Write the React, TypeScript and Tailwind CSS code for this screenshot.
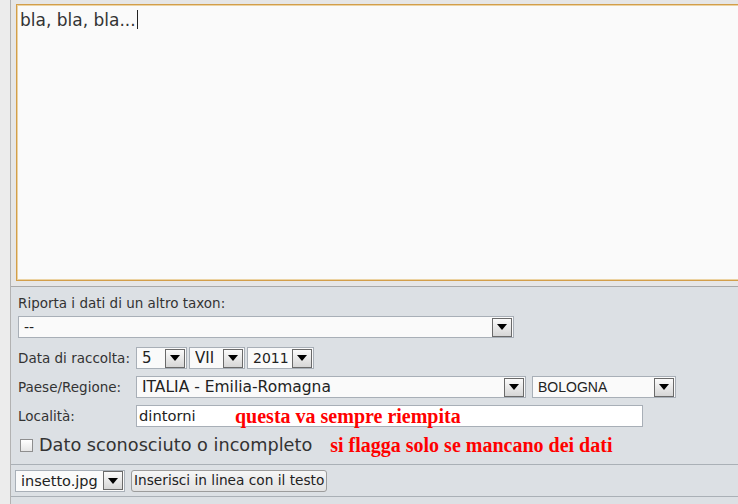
import React from "react";

function Arrow() {
  return (
    <div className="m-[1px] flex h-[19px] w-[20px] shrink-0 items-center justify-center border border-[#6a6a6a] bg-gradient-to-b from-[#fbfbfb] to-[#d6d6d6]">
      <svg width="10" height="6" viewBox="0 0 10 6">
        <polygon points="0,0 10,0 5,6" fill="#000" />
      </svg>
    </div>
  );
}

function Sel({ w, text, cls = "" }: { w: string; text: string; cls?: string }) {
  return (
    <div className={`flex h-[22px] items-center border border-[#a8afb7] bg-[#fafafa] pl-[5px] ${w}`}>
      <span className={`min-w-0 flex-1 overflow-hidden whitespace-nowrap leading-[20px] text-[#222] ${cls}`}>{text}</span>
      <Arrow />
    </div>
  );
}

export default function App() {
  return (
    <div className="flex h-[504px] w-[738px] overflow-hidden bg-[#dce0e4] text-[#333]" style={{ fontFamily: '"DejaVu Sans", Verdana, sans-serif' }}>
      <div className="w-[11px] shrink-0 border-r border-[#b2b2b2] bg-[#ececec]" />
      <div className="flex min-w-0 flex-1 flex-col">
        <div className="flex h-[287px] shrink-0 flex-col border-b border-[#a9a9a9] bg-[#e6e6e6] pl-[5px] pt-[4px]">
          <div className="h-[277px] w-[760px] border border-[#d29e4a] bg-[#fafafa] pl-[3px] pt-[2px] shadow-[inset_0_0_0_1px_#ecd3a3]">
            <span className="text-[17px] leading-[24px] text-[#333]">bla, bla, bla...</span>
            <span className="ml-[1px] inline-block h-[19px] w-[1px] translate-y-[3px] bg-[#222]" />
          </div>
        </div>

        <div className="flex flex-col pl-[7px]">
          <div className="mt-[8px] h-[16px] text-[13.5px] leading-[16px]">Riporta i dati di un altro taxon:</div>
          <div className="mt-[5px]">
            <Sel w="w-[496px]" text="--" cls="text-[14px]" />
          </div>
          <div className="mt-[9px] flex h-[22px] items-center">
            <span className="w-[118px] text-[13.5px]">Data di raccolta:</span>
            <div className="flex gap-[2px]">
              <Sel w="w-[51px]" text="5" cls="text-[15px]" />
              <Sel w="w-[56px]" text="VII" cls="text-[15px]" />
              <Sel w="w-[67px]" text="2011" cls="text-[14px]" />
            </div>
          </div>
          <div className="mt-[7px] flex h-[22px] items-center">
            <span className="w-[118px] text-[13.5px]">Paese/Regione:</span>
            <Sel w="w-[390px]" text="ITALIA - Emilia-Romagna" cls="text-[15.5px]" />
            <div className="ml-[6px]">
              <Sel w="w-[144px]" text="BOLOGNA" cls="font-['Liberation_Sans'] text-[14px]" />
            </div>
          </div>
          <div className="mt-[7px] flex h-[22px] items-center">
            <span className="w-[118px] text-[13.5px]">Località:</span>
            <div className="flex h-[22px] w-[507px] items-center border border-[#a8afb7] bg-white pl-[2px]">
              <span className="w-[96px] text-[14.7px] text-[#222]">dintorni</span>
              <span className="text-[20px] font-bold leading-none text-[#ff0000]" style={{ fontFamily: '"Liberation Serif", serif' }}>
                questa va sempre riempita
              </span>
            </div>
          </div>
          <div className="mt-[7px] flex h-[22px] items-center">
            <span className="ml-[2px] h-[13px] w-[13px] border border-[#8e8e8e] bg-gradient-to-b from-white to-[#e6e6e6]" />
            <span className="ml-[6px] text-[17.7px] text-[#333]">Dato sconosciuto o incompleto</span>
            <span className="ml-[18px] text-[20px] font-bold text-[#ff0000]" style={{ fontFamily: '"Liberation Serif", serif' }}>
              si flagga solo se mancano dei dati
            </span>
          </div>
        </div>

        <div className="mt-[8px] flex h-[33px] shrink-0 items-center gap-[6px] border-y border-[#aab0b6] pl-[4px]">
          <Sel w="w-[110px]" text="insetto.jpg" cls="text-[14.5px]" />
          <div className="flex h-[22px] items-center rounded-[3px] border border-[#9c9c9c] bg-gradient-to-b from-[#f6f6f6] to-[#e2e2e2] px-[2px] text-[13.7px] text-[#222]">
            Inserisci in linea con il testo
          </div>
        </div>
      </div>
    </div>
  );
}
